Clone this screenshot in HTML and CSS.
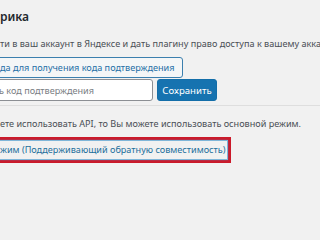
FILE: index.html
```html
<!DOCTYPE html>
<html lang="ru">
<head>
<meta charset="utf-8">
<link rel="stylesheet" href="styles.css">
</head>
<body>
<div class="page">
  <h2 class="title">рика</h2>
  <p class="desc">ти в ваш аккаунт в Яндексе и дать плагину право доступа к вашему аккау</p>
  <a class="btn-secondary" href="#">да для получения кода подтверждения</a>
  <div class="row">
    <input class="code" type="text" placeholder="ь код подтверждения">
    <button class="btn-primary" type="button">Сохранить</button>
  </div>
  <hr class="sep">
  <p class="note">ете использовать API, то Вы можете использовать основной режим.</p>
  <div class="redbox">
    <a class="focus-link" href="#">жим (Поддерживающий обратную совместимость)</a>
  </div>
</div>
</body>
</html>
```

FILE: styles.css
```css
html, body {
  margin: 0;
  padding: 0;
  background: #f1f1f1;
  overflow: hidden;
  width: 320px;
  height: 200px;
}
body {
  font-family: "Noto Sans", "Open Sans", sans-serif;
  color: #4a4f55;
  font-size: 9.1px;
}
.page {
  margin-left: -12px;
  padding-top: 8px;
  display: flex;
  flex-direction: column;
  align-items: flex-start;
  white-space: nowrap;
}
.title {
  margin: 0 0 0 12px;
  font-size: 12px;
  font-weight: 600;
  line-height: 17px;
  color: #23282d;
}
.desc {
  margin: 12px 0 0 12px;
  line-height: 14px;
}
.btn-secondary {
  margin-top: 6px;
  box-sizing: border-box;
  height: 21px;
  line-height: 19px;
  padding: 0 8px 0 11px;
  border: 1px solid #3b7fae;
  border-radius: 3px;
  background: #f4f6f7;
  color: #1f6fa6;
  text-decoration: none;
  font-size: 9.1px;
}
.row {
  margin-top: 1px;
  display: flex;
  gap: 4px;
}
.code {
  box-sizing: border-box;
  width: 165px;
  height: 22px;
  margin: 0;
  padding: 0 0 0 10px;
  border: 1px solid #8c8f94;
  border-radius: 3px;
  background: #fff;
  font-family: inherit;
  font-size: 9.1px;
}
.code::placeholder {
  color: #7a7e83;
}
.btn-primary {
  box-sizing: border-box;
  width: 60px;
  height: 22px;
  margin: 0;
  padding: 0;
  border: 1px solid #136ea9;
  border-radius: 3px;
  background: #1673b0;
  color: #fff;
  font-family: inherit;
  font-size: 9.6px;
}
.sep {
  align-self: stretch;
  margin: 4px 0 0 0;
  border: 0;
  border-top: 1px solid #dedede;
  height: 0;
}
.note {
  margin: 11px 0 0 12px;
  line-height: 14px;
}
.redbox {
  margin-top: 6px;
  box-sizing: border-box;
  width: 243px;
  height: 26px;
  border: 3px solid #cc1a2a;
  padding: 1px;
  display: flex;
}
.focus-link {
  flex: 1;
  box-sizing: border-box;
  padding-left: 8px;
  line-height: 18px;
  color: #1d6f9c;
  text-decoration: none;
  box-shadow: 0 0 0 1px #7fb6d9, 0 0 2px 1px rgba(79, 148, 212, 0.5);
}
```
